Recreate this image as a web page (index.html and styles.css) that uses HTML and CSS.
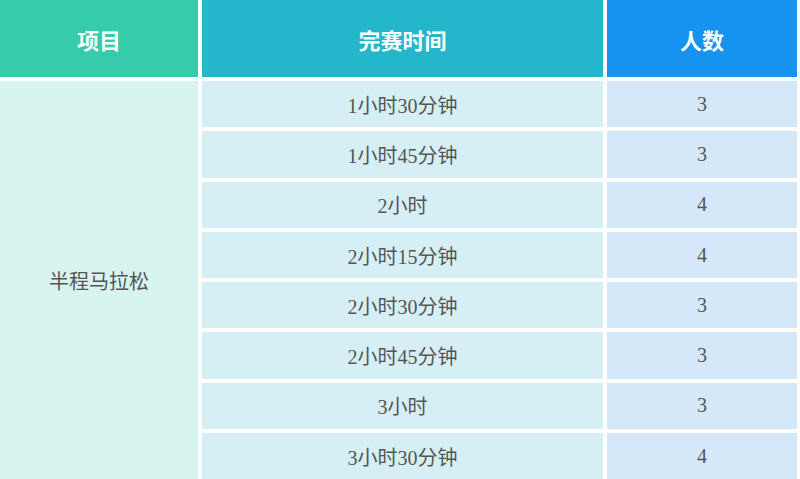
FILE: index.html
```html
<!DOCTYPE html>
<html lang="zh">
<head>
<meta charset="utf-8">
<title>半程马拉松</title>
<link rel="stylesheet" href="styles.css">
</head>
<body>
<div class="table">
  <div class="th th-1">项目</div>
  <div class="th th-2">完赛时间</div>
  <div class="th th-3">人数</div>
  <div class="cell-item">半程马拉松</div>
  <div class="td td-time">1小时30分钟</div><div class="td td-num">3</div>
  <div class="td td-time">1小时45分钟</div><div class="td td-num">3</div>
  <div class="td td-time">2小时</div><div class="td td-num">4</div>
  <div class="td td-time">2小时15分钟</div><div class="td td-num">4</div>
  <div class="td td-time">2小时30分钟</div><div class="td td-num">3</div>
  <div class="td td-time">2小时45分钟</div><div class="td td-num">3</div>
  <div class="td td-time">3小时</div><div class="td td-num">3</div>
  <div class="td td-time">3小时30分钟</div><div class="td td-num">4</div>
</div>
</body>
</html>
```

FILE: styles.css
```css
html, body {
  margin: 0;
  padding: 0;
  background: #ffffff;
  overflow: hidden;
}
.table {
  display: grid;
  grid-template-columns: 198px 401px 190px;
  grid-template-rows: 77px repeat(8, 46.3px);
  column-gap: 4px;
  row-gap: 4px;
  width: 797px;
}
.th {
  display: flex;
  align-items: center;
  justify-content: center;
  color: #ffffff;
  font-family: "Noto Sans CJK SC", sans-serif;
  font-weight: 700;
  font-size: 22px;
}
.th-1 { background: #36cbaa; }
.th-2 { background: #24b6ca; }
.th-3 { background: #1693ee; }
.cell-item {
  grid-row: 2 / span 8;
  grid-column: 1;
  background: #d8f4f0;
  display: flex;
  align-items: center;
  justify-content: center;
  color: #555555;
  font-family: "Noto Sans CJK SC", sans-serif;
  font-size: 20px;
}
.td {
  display: flex;
  align-items: center;
  justify-content: center;
  color: #555555;
  font-family: "Liberation Serif", "Noto Sans CJK SC", serif;
  font-size: 20px;
}
.td-time { background: #d6eff5; }
.td-num { background: #d4e8fa; }
```
